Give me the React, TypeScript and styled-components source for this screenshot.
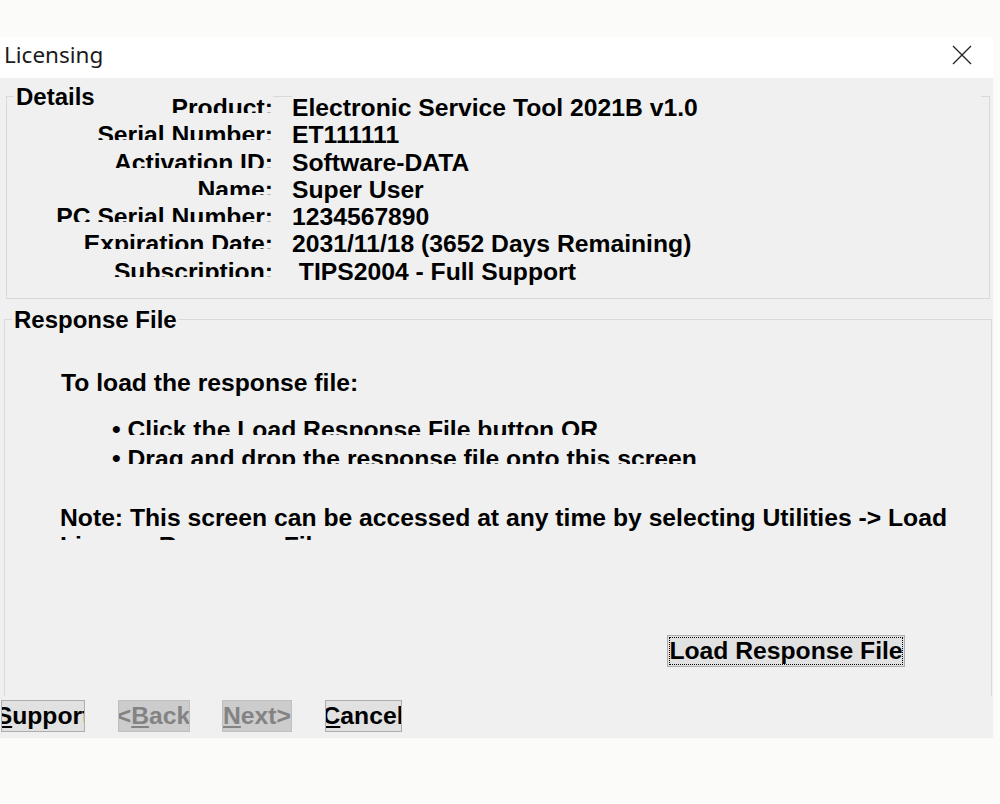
import { Fragment } from 'react';
import styled, { createGlobalStyle } from 'styled-components';

const GlobalStyle = createGlobalStyle`
  html, body {
    margin: 0;
    padding: 0;
    background: #fbfbfa;
  }
  body {
    font-family: "Liberation Sans", Arial, sans-serif;
    color: #000;
  }
`;

const FONT_SIZE = '24.7px';

const Page = styled.div`
  padding-top: 37px;
`;

const Window = styled.div`
  width: 993px;
`;

const TitleBar = styled.div`
  height: 41px;
  box-sizing: border-box;
  background: #fff;
  display: flex;
  align-items: center;
  justify-content: space-between;
  padding: 0 21px 6px 4px;
`;

const Title = styled.span`
  font-family: "Noto Sans", "Open Sans", sans-serif;
  font-size: 22.5px;
  color: #1b1b1b;
`;

const CloseButton = styled.button`
  border: none;
  background: transparent;
  padding: 0;
  width: 20px;
  height: 20px;
  display: flex;
  cursor: pointer;
`;

const Body = styled.div`
  background: #f0f0f0;
  height: 660px;
  box-sizing: border-box;
  padding-top: 18px;
  display: flex;
  flex-direction: column;
`;

const GroupBox = styled.div<{ $left: number; $right: number; $height: number; $top?: number; $open?: boolean }>`
  position: relative;
  box-sizing: border-box;
  margin: ${(p) => p.$top ?? 0}px ${(p) => p.$right}px 0 ${(p) => p.$left}px;
  height: ${(p) => p.$height}px;
  border: 1px solid #d9d9d9;
  ${(p) => (p.$open ? 'border-bottom: none;' : '')}
`;

const Caption = styled.span`
  position: absolute;
  top: -14px;
  left: 7px;
  padding: 0 2px;
  background: #f0f0f0;
  font-weight: bold;
  font-size: 24px;
  line-height: 28px;
  white-space: nowrap;
`;

const DetailsGrid = styled.div`
  display: grid;
  grid-template-columns: 235px 1fr;
  column-gap: 19px;
  grid-auto-rows: 27.3px;
  margin-top: -3px;
  padding: 0 8px 0 31px;
  font-weight: bold;
  font-size: ${FONT_SIZE};
  line-height: 27.3px;
`;

const LabelCell = styled.div<{ $cover?: boolean }>`
  text-align: right;
  white-space: nowrap;
  height: 19px;
  overflow: hidden;
  margin-top: ${(p) => (p.$cover ? '-3px' : '0')};
  padding-top: ${(p) => (p.$cover ? '3px' : '0')};
  background: #f0f0f0;
`;

const ValueCell = styled.div<{ $cover?: boolean }>`
  white-space: nowrap;
  margin-top: ${(p) => (p.$cover ? '-3px' : '0')};
  padding-top: ${(p) => (p.$cover ? '3px' : '0')};
  background: ${(p) => (p.$cover ? '#f0f0f0' : 'transparent')};
`;

const ResponseInner = styled.div`
  padding: 49px 0 0 56px;
  font-weight: bold;
  font-size: ${FONT_SIZE};
  line-height: 28px;
`;

const Heading = styled.div`
  height: 28px;
  white-space: nowrap;
`;

const BulletList = styled.div`
  margin: 19px 0 0 51px;
`;

const BulletLine = styled.div`
  height: 19px;
  overflow: hidden;
  white-space: nowrap;
  & + & {
    margin-top: 10px;
  }
`;

const Note = styled.div`
  margin: 40px 0 0 -1px;
  width: 910px;
  height: 36px;
  overflow: hidden;
`;

const ActionRow = styled.div`
  display: flex;
  justify-content: flex-end;
  margin-top: 95px;
  padding-right: 86px;
`;

const WinButton = styled.button<{ $width: number; $disabled?: boolean; $focused?: boolean }>`
  box-sizing: border-box;
  width: ${(p) => p.$width}px;
  height: 32px;
  padding: 0;
  display: flex;
  align-items: center;
  justify-content: center;
  overflow: hidden;
  white-space: nowrap;
  font-family: "Liberation Sans", Arial, sans-serif;
  font-weight: bold;
  font-size: ${FONT_SIZE};
  line-height: 30px;
  border: 1px solid ${(p) => (p.$disabled ? '#bfbfbf' : '#adadad')};
  background: ${(p) => (p.$disabled ? '#cccccc' : '#e1e1e1')};
  color: ${(p) => (p.$disabled ? '#838383' : '#000')};
  outline: ${(p) => (p.$focused ? '1px dotted #000' : 'none')};
  outline-offset: -3px;
  border-radius: 0;
  cursor: default;

  u {
    text-decoration-thickness: 2px;
    text-underline-offset: 2px;
  }
`;

const ButtonBar = styled.div`
  display: flex;
  gap: 32.5px;
  margin-top: 4px;
  padding-left: 1px;
`;

const details: [string, string][] = [
  ['Product:', 'Electronic Service Tool 2021B v1.0'],
  ['Serial Number:', 'ET111111'],
  ['Activation ID:', 'Software-DATA'],
  ['Name:', 'Super User'],
  ['PC Serial Number:', '1234567890'],
  ['Expiration Date:', '2031/11/18 (3652 Days Remaining)'],
  ['Subscription:', '\u00a0TIPS2004 - Full Support'],
];

export default function App() {
  return (
    <>
      <GlobalStyle />
      <Page>
        <Window>
          <TitleBar>
            <Title>Licensing</Title>
            <CloseButton aria-label="Close">
              <svg width="20" height="20" viewBox="0 0 20 20">
                <path d="M1 1 L19 19 M19 1 L1 19" stroke="#222" strokeWidth="1.3" fill="none" />
              </svg>
            </CloseButton>
          </TitleBar>
          <Body>
            <GroupBox $left={6} $right={3} $height={203}>
              <DetailsGrid>
                {details.map(([label, value], i) => (
                  <Fragment key={label}>
                    <LabelCell $cover={i === 0}>{label}</LabelCell>
                    <ValueCell $cover={i === 0}>{value}</ValueCell>
                  </Fragment>
                ))}
              </DetailsGrid>
              <Caption>Details</Caption>
            </GroupBox>

            <GroupBox $left={4} $right={1} $height={377} $top={20} $open>
              <Caption>Response File</Caption>
              <ResponseInner>
                <Heading>To load the response file:</Heading>
                <BulletList>
                  <BulletLine>• Click the Load Response File button OR</BulletLine>
                  <BulletLine>• Drag and drop the response file onto this screen</BulletLine>
                </BulletList>
                <Note>
                  Note: This screen can be accessed at any time by selecting Utilities -&gt; Load License Response File
                </Note>
                <ActionRow>
                  <WinButton $width={238} $focused>Load Response File</WinButton>
                </ActionRow>
              </ResponseInner>
            </GroupBox>

            <ButtonBar>
              <WinButton $width={84}><u>S</u>upport</WinButton>
              <WinButton $width={72} $disabled>&lt;<u>B</u>ack</WinButton>
              <WinButton $width={70} $disabled><u>N</u>ext&gt;</WinButton>
              <WinButton $width={77}><u>C</u>ancel</WinButton>
            </ButtonBar>
          </Body>
        </Window>
      </Page>
    </>
  );
}
